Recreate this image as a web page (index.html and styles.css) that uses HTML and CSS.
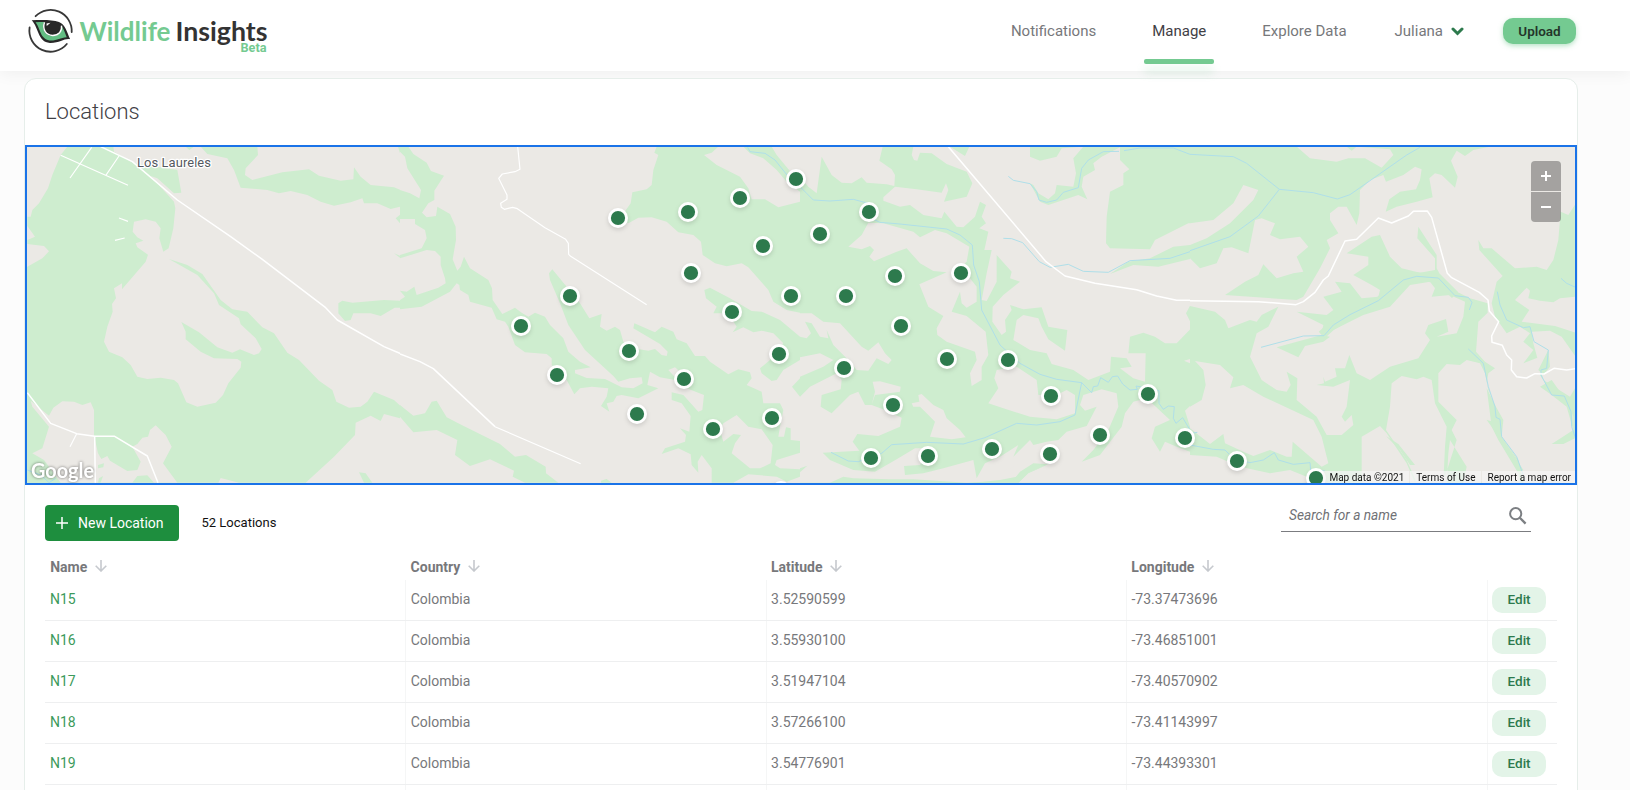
FILE: index.html
```html
<!DOCTYPE html>
<html lang="en">
<head>
<meta charset="utf-8">
<title>Wildlife Insights</title>
<link rel="stylesheet" href="styles.css">
</head>
<body>
<header class="topbar">
  <svg class="logo" width="250" height="60" viewBox="0 0 250 60">
    <g fill="none" stroke="#383838" stroke-width="1.8" stroke-linecap="round">
      <path d="M8.600 16.200A21.100 21.100 0 0 1 44.700 32"/>
      <path d="M2.600 27.500A21.100 21.100 0 0 0 39.800 44"/>
    </g>
    <path d="M4.700 20.300C14 19.700 25 19.500 32 22c6.500 2.500 8 10.500 11.200 17.300C37.500 38 33 43.200 23 43 10.500 42 12 28 4.700 20.300z" fill="#282828"/>
    <path d="M8.500 22.300c3-.3 6-.4 8.500-.4-2.500 8.500 2 14 8.700 14 6 0 9.500-4 9-10 2 3 3.300 6.800 5 11.300C33 37.500 30 41 22.500 40.500 13 39 13.500 28.500 8.500 22.300z" fill="#63bd83"/>
    <path d="M17.500 22.300c-2.500 7.500 1.700 13.200 8.200 13.200 6 0 9.500-4 8.800-9.800" fill="none" stroke="#fff" stroke-width="1.400"/>
    <circle cx="25.700" cy="27.300" r="6.300" fill="#282828"/>
    <path d="M19.500 23.500l4-.8-3.800 3.300z" fill="#fff"/>
    <text x="52.500" y="40.700" class="brand brand-green" textLength="91" lengthAdjust="spacingAndGlyphs">Wildlife</text>
    <text x="148.500" y="40.700" class="brand brand-dark" textLength="92" lengthAdjust="spacingAndGlyphs">Insights</text>
    <text x="213.500" y="52" class="brand-beta" textLength="26" lengthAdjust="spacingAndGlyphs">Beta</text>
  </svg>
  <nav class="nav">
    <a class="nav-item">Notifications</a>
    <a class="nav-item nav-active">Manage</a>
    <a class="nav-item nav-explore">Explore Data</a>
    <a class="nav-item nav-user">Juliana
      <svg width="13" height="9" viewBox="0 0 13 9"><path d="M2 2l4.500 4.500L11 2" fill="none" stroke="#2d7a4d" stroke-width="3" stroke-linecap="round"/></svg>
    </a>
    <button class="upload">Upload</button>
  </nav>
</header>
<main class="card">
  <h1 class="title">Locations</h1>
  <section class="map">
    <svg class="map-canvas" width="1550" height="336" viewBox="27 147 1550 336">
      <defs>
        <g id="pin"><circle r="10" fill="#fff"/><circle r="7.100" fill="#2d7a4d"/></g>
      </defs>
      <svg x="24" y="140" width="376" height="350" viewBox="0 0 1128 1050">
        <path class="dry" d="M0 0h1128v1050H0z"/>
        <path class="wood" d="M130 20 268 20 270 35 330 70 460 90 472 158 450 160 400 115 380 108 450 185 454 205 448 265 434 325 418 335 406 295 410 265 395 245 365 238 330 245 326 275 340 292 358 302 335 310 340 322 372 344 365 365 294 448 294 430 270 445 276 475 264 492 266 515 250 560 240 605 255 635 295 652 320 675 340 710 370 717 410 713 450 720 462 730 487 787 520 800 575 788 597 765 613 730 650 683 652 665 640 657 570 655 530 635 485 598 485 575 472 546 525 577 580 622 625 638 648 628 690 645 705 640 713 627 695 595 650 553 645 535 585 495 570 460 520 405 435 357 490 375 535 402 590 480 625 508 670 515 715 562 750 580 790 638 825 660 885 722 925 750 937 785 975 803 1010 800 1030 785 1050 755 1110 780 1160 825 1165 877 1130 835 1080 822 1070 843 1040 827 995 848 993 885 930 950 845 1028 645 1028 590 1014 583 1028 460 1028 0 1050 0 380 10 380 55 355 75 334 60 318 10 312 10 300 33 290 10 258 10 230 20 230 25 210 45 190 72 145 85 105 110 45z"/>
        <path class="dry" d="M20 782 75 827 88 803 115 784 150 785 175 795 200 787 210 810 210 885 222 940 232 957 250 948 258 962 310 993 340 990 350 965 325 920 340 912 355 893 372 890 378 870 395 856 425 885 443 920 417 970 460 1028 110 1028 60 960 25 940 55 925 75 860 25 800z"/>
        <path class="wood" d="M325 1028 340 1008 370 1006 390 1028zM222 975 240 970 238 982 222 985zM225 1015 237 1008 230 1028 222 1028zM1005 997 1025 1000 1045 1028 1020 1028z"/>
        <path class="wood" d="M530 20 700 20 702 45 665 85 663 105 685 120 775 97 855 88 885 107 950 122 988 118 990 82 1010 110 1040 135 1110 142 1190 175 1150 90 1128 50 1128 250 1115 235 1140 215 1128 200 1100 207 1060 190 1020 190 1015 175 980 187 930 197 890 185 850 165 800 153 765 160 730 150 650 143 630 90 610 55 550 42zM485 20h25l-14 10zM1110 340 1128 347 1128 353zM943 490 955 482 985 488 1080 480 1128 482 1128 503 1112 503 1070 528 1040 520 988 520 980 540 963 543 943 520zM1128 20 1128 40 1122 20z"/>
        <g class="road">
          <path class="road-main" d="M230 20 325 65 460 180 620 290 715 358 905 503 940 540 1080 620 1200 670"/>
          <path class="road-main" d="M10 758 80 850 158 881 212 889H272L370 948 402 1028M212 889 214 1028"/>
          <path d="M110 46 312 136M203 22 138 114M285 48 245 107M285 234 312 244M273 301 302 294M158 881 138 920"/>
        </g>
        <path class="river" d="M10 990 50 1005 75 1028 95 1015"/>
      </svg>
      <svg x="400" y="140" width="400" height="350" viewBox="0 0 1200 1050">
        <path class="dry" d="M0 0h1200v1050H0z"/>
        <path class="wood" d="M0 20 25 20 40 42 80 68 93 93 132 107 103 152 103 180 85 190 66 218 80 232 108 228 112 200 150 222 167 260 168 300 158 358 172 392 182 380 192 350 210 385 265 420 276 445 278 480 307 522 345 503 365 518 385 530 405 518 435 530 450 555 490 595 505 635 540 665 572 682 525 690 525 700 560 714 615 717 665 742 700 745 728 730 725 712 690 715 655 725 640 708 555 630 505 555 480 490 450 420 447 400 457 388 500 440 540 490 568 535 605 522 600 560 620 572 645 560 660 570 670 605 700 625 745 632 765 627 785 645 800 648 803 635 780 612 700 565 703 550 765 577 785 560 820 575 830 598 860 610 885 648 915 648 930 665 985 703 1015 688 1050 697 1055 715 1040 735 1085 755 1090 790 1140 790 1150 810 1140 860 1135 890 1152 890 1158 862 1172 865 1172 900 1200 903 1200 938 1130 960 1125 975 1140 985 1200 988 1200 1010 1160 1025 1130 1010 1045 1003 1000 1028 935 1028 935 985 905 945 893 965 895 998 875 975 872 943 835 925 785 942 795 925 855 905 858 885 840 865 868 875 872 828 845 790 815 780 815 757 850 765 895 815 907 810 912 765 860 745 825 720 780 712 750 695 742 735 775 745 715 775 665 765 650 768 640 785 620 790 628 815 603 798 620 770 625 745 575 740 540 745 523 763 500 720 455 675 455 655 440 642 375 637 345 615 325 560 315 545 290 538 275 503 210 485 205 465 180 450 178 435 170 430 150 455 65 500 0 508 0 480 15 470 0 452 20 455 43 440 50 465 115 443 137 430 135 415 122 375 122 350 105 333 80 330 0 355 0 345 65 325 80 295 75 270 45 252 45 237 0 237 0 150 30 160 58 175 63 150 22 85 15 50 0 35z"/>
        <path class="dry" d="M970 850 1010 825 1045 860 1085 868 1118 915 1112 970 1080 985 1050 985 995 940 1005 910 1023 885 1000 882 970 905 960 870zM805 690 825 682 840 695 825 712z"/>
        <path class="wood" d="M770 20 763 38 775 45 760 90 755 135 740 148 697 157 692 190 660 235 685 250 715 233 755 232 800 245 835 277 880 285 903 305 908 345 945 370 980 379 1025 370 1045 382 1105 450 1120 485 1160 510 1200 518 1200 185 1135 202 1095 178 1055 178 1045 145 1020 110 950 75 912 45 935 38 955 20z"/>
        <path class="wood" d="M1030 20 1115 20 1130 45 1200 130 1200 155 1160 125 1130 90 1090 55 1050 40zM913 450 930 443 990 475 1055 513 1085 515 1140 540 1200 590 1200 660 1150 690 1130 720 1115 723 1085 700 1080 685 1110 660 1150 610 1120 580 1085 572 1060 577 1030 562 998 577 1010 560 985 520 940 520 950 500 918 475zM1176 740 1200 715 1200 770zM0 795 40 827 75 820 95 785 110 782 140 832 185 855 300 912 345 950 378 945 437 980 438 1000 475 1028 375 1028 338 1010 342 992 270 958 210 978 165 945 172 900 110 870 40 877 0 830zM603 1022 620 1017 635 1028 603 1028z"/>
        <g class="road">
          <path d="M353 20 360 88 345 95 307 102 296 115 321 165 321 178 302 190 304 202 313 208 338 202 352 206 435 263 497 298 505 310 506 343 512 349 740 494"/>
          <path class="road-main" d="M0 642 60 665 100 686 285 860"/>
          <path d="M285 860 542 971"/>
        </g>
        <path class="river" d="M1043 22 1050 35 1095 40 1125 60 1165 110 1200 140"/>
      </svg>
      <svg x="800" y="140" width="390" height="350" viewBox="0 0 1170 1050">
        <path class="wood" d="M0 0h1170v1050H0z"/>
        <path class="dry" d="M0 20 248 20 238 62 275 88 285 105 283 138 260 133 250 172 285 140 350 148 425 158 438 130 445 150 432 185 500 170 517 130 500 95 440 72 395 40 360 38 352 62 342 60 335 45 340 20 450 20 495 48 508 20 690 20 690 50 720 62 770 50 785 25 850 20 820 55 828 100 820 140 770 135 765 160 745 178 715 160 700 135 690 130 720 185 745 195 790 180 835 165 862 178 845 140 850 110 885 90 880 70 905 50 960 22 960 60 988 88 970 100 970 135 930 155 920 230 918 310 930 325 1050 328 1065 300 1165 250 1170 250 1170 315 1120 320 1050 355 985 365 930 402 1000 375 1075 380 1170 357 1170 497 1158 520 1178 560 1130 610 1095 610 1065 590 1030 578 990 590 985 640 1037 640 1035 725 1000 715 960 685 995 680 980 655 933 650 930 695 865 720 820 690 755 672 740 640 690 630 640 600 650 540 670 525 715 535 725 560 745 598 795 632 802 570 745 560 725 502 670 508 630 495 635 510 615 540 618 575 605 585 577 545 578 500 610 465 660 425 630 415 635 395 590 345 590 425 560 483 545 480 560 400 575 330 553 330 565 275 538 265 558 250 545 230 558 195 540 185 525 230 490 262 470 260 433 215 425 235 370 225 330 195 300 200 250 182 250 172 260 133 200 128 185 112 155 130 125 128 95 105 65 50 50 160 25 140 0 110z"/>
        <path class="dry" d="M205 248 185 285 145 320 185 328 210 318 222 330 208 350 222 364 290 335 320 325 360 370 400 393 440 397 358 433 385 500 430 528 410 565 412 585 440 605 525 635 530 660 510 700 515 738 545 720 545 680 565 645 557 575 500 528 455 515 480 455 485 490 500 503 530 485 530 440 510 415 460 400 500 365 508 320 440 280 405 270 360 292 340 275 250 250z"/>
        <path class="dry" d="M0 520 35 520 70 545 120 550 185 620 205 632 235 607 255 640 275 660 265 672 230 655 205 692 170 690 150 665 100 615 80 570 85 595 60 590 35 550 15 545 33 580 20 595 0 590zM0 652 60 640 100 660 70 680 0 710zM590 690 650 680 710 720 715 765 780 760 800 750 825 765 825 820 770 838 690 830 610 805 565 790 595 745 583 715zM355 765 365 762 400 795 430 810 440 835 480 870 497 892 455 898 390 890 405 845 380 820 360 800 340 800 335 790 358 785z"/>
        <path class="dry" d="M0 770 30 740 110 700 125 720 122 748 65 765 62 800 95 820 150 765 175 755 195 795 215 795 225 765 300 755 302 740 240 724 218 725 225 755 215 795 255 810 305 833 300 860 235 888 172 882 158 905 178 932 68 938 90 960 160 990 225 995 290 958 345 925 390 925 360 975 312 978 315 1005 370 1000 430 985 520 960 530 1015 555 970 600 950 655 915 640 950 690 900 700 915 740 905 775 900 800 875 860 858 890 800 855 812 840 795 850 765 905 748 950 760 955 800 925 870 880 930 845 965 900 945 965 860 975 820 1000 785 1040 775 1110 840 1065 860 1055 895 1080 935 1095 905 1130 920 1170 935 1170 1028 655 1028 685 1000 740 975 650 1010 600 1020 550 1025 500 1028 340 1018 270 1018 160 1015 130 1010 90 1028 0 1028z"/>
        <path class="wood" d="M0 985 22 977 0 997zM655 1028 685 998 745 973 700 970 660 995 640 1020 540 1028z"/>
        <path class="dry" d="M1152 662 1170 657 1170 670zM1155 812 1170 798 1170 860zM600 1000 650 975 690 970 640 1010 600 1018z"/>
        <g class="river">
          <path d="M0 140 20 160 40 180 90 183 160 178 205 190M225 240 240 247 300 252 440 267 480 285 517 315 521 375 538 425 545 510 600 615 660 670 720 703 770 718 845 728 875 758 880 740 893 738 902 713 925 727 937 710 953 708 968 732 990 750 1012 748 1008 738 1045 745 1077 752 1077 790 1090 808 1105 798 1123 800 1120 835 1128 850 1148 833 1170 870M845 728 825 825 780 845 710 855 650 850 555 893 490 912 380 907 275 914 245 940 175 965 145 963 93 937"/>
          <path d="M625 109 640 121 690 131 710 155 717 180 740 187 770 180 790 157 835 143 845 85 865 60 910 35 957 34M972 32 1020 24 1120 24 1170 43M610 295 635 296 668 308 718 365 750 382 805 373 850 394 925 397 990 362 1110 355 1170 335"/>
        </g>
        <path class="road road-main" d="M445 20 738 365 795 408 885 430 1010 449 1070 468 1130 481 1170 481"/>
      </svg>
      <svg x="1190" y="140" width="388" height="350" viewBox="0 0 1164 1050">
        <path class="wood" d="M0 0h1164v1050H0z"/>
        <path class="dry" d="M320 20 360 55 440 65 475 55 525 55 575 83 610 45 600 28 500 20 485 32 470 20zM0 250 70 240 130 190 160 135 205 150 190 180 120 250 50 295 0 315zM0 355 30 385 80 370 100 325 125 322 175 340 185 290 195 240 215 235 255 250 240 285 270 298 330 290 355 320 320 350 340 395 310 400 260 415 220 373 205 405 165 425 105 465 320 480 340 470 390 385 420 325 410 300 445 280 420 240 420 220 445 200 470 200 500 255 508 220 510 150 540 120 580 105 588 125 640 105 675 80 695 88 690 120 678 148 630 155 598 178 587 215 620 200 680 185 728 172 718 115 735 100 755 105 795 143 803 110 783 62 800 32 825 48 850 30 900 20 1164 20 1164 180 1135 225 1112 215 1105 300 1090 360 1070 390 1040 380 975 385 905 325 880 325 865 300 868 330 938 408 920 425 905 490 915 530 950 580 990 560 1020 580 1000 605 1030 630 1000 670 1050 650 1060 680 1050 705 1085 760 1125 765 1150 830 1150 870 1085 912 1120 912 1164 890 1164 1028 1000 1028 985 960 935 890 930 850 890 840 915 800 890 730 895 700 915 685 885 665 858 635 865 545 893 518 893 490 840 475 770 440 740 385 740 345 685 260 682 295 735 355 735 390 690 398 635 385 600 350 570 285 545 290 470 340 535 350 535 375 490 405 545 435 570 450 565 470 515 475 480 430 435 425 455 455 400 470 430 510 410 525 320 515 400 555 395 580 430 570 520 525 600 500 660 435 720 425 735 445 725 470 780 465 825 485 820 530 800 580 740 590 775 575 768 537 715 555 705 580 720 600 685 655 600 680 540 720 500 700 478 645 465 685 435 685 440 710 405 725 400 710 402 730 380 735 430 740 480 720 470 800 455 830 465 845 485 825 490 855 455 885 410 885 380 830 320 780 322 715 290 695 302 735 290 755 260 750 215 720 180 650 200 580 235 560 265 500 215 525 200 545 180 540 115 565 105 540 75 515 0 498z"/>
        <path class="wood" d="M260 622 325 652 345 618 400 605 420 590 395 585z"/>
        <path class="bank" d="M395 585 425 558 480 525 565 485 640 425 680 410 745 415 795 465"/>
        <path class="dry" d="M15 663 90 675 130 712 120 745 160 735 220 770 370 840 395 890 415 970 395 980 308 905 305 950 290 950 240 930 190 948 160 935 105 910 100 882 60 912 0 865 0 800 35 780 47 735 40 690zM745 700 770 672 810 675 830 660 870 670 885 700 895 750 915 790 912 820 890 840 912 870 935 890 980 960 990 1028 820 1028 830 980 780 900 775 940 770 1028 675 1028 680 1010 765 1010 800 900 785 870 800 840 745 785zM605 730 635 708 680 718 700 710 725 720 735 790 770 860 765 920 760 1028 680 1028 650 960 588 870 600 800zM515 890 570 858 590 880 650 970 675 1028 515 1028zM0 945 80 950 150 980 240 1000 300 990 350 1010 360 1028 0 1028z"/>
        <path class="dry" d="M975 480 1010 443 1020 452 1015 475 1050 482 1090 487 1110 475 1155 470 1164 580 1095 558 995 545 1018 510zM1025 575 1080 572 1115 590 1164 660 1164 730 1140 770 1060 720 1030 610z"/>
        <path class="wood" d="M1050 740 1085 720 1110 755 1145 780 1150 870 1130 800 1085 765zM1045 690 1075 630 1080 680 1060 705z"/>
        <path class="wood" d="M588 888 625 912 675 975 660 975 630 930zM890 745 918 800 940 840 935 890 1000 990 985 1000 925 900 905 860z"/>
        <g class="river">
          <path d="M0 43 130 50 170 70 268 148 370 158 442 177 480 164 650 45 690 22M268 148 205 228 120 290 0 332M213 622 340 588 402 587 430 555 480 524 565 482 640 420 680 409 745 414 795 467 835 472 846 487 838 510M922 455 930 495 950 540 1000 563 1020 560 1032 605 1075 630 1070 685 1053 690 1053 705 1085 765 1123 768 1143 815 1145 860 1155 890M835 627 880 670 895 740 915 800 918 832 930 838 935 890 980 950 1005 1020M1113 415 1130 430 1155 441M0 915 70 928 105 930 130 955 180 968 220 960 253 938 265 960 310 973 360 968 362 990 405 993M5 880 22 877"/>
        </g>
        <path class="road road-main" d="M0 482 205 485 318 494 340 485 375 457 400 420 415 408 465 303 500 298 565 234 605 249 655 228 670 214 712 213 725 232 772 400 785 413 868 457 894 480 898 513 926 545 905 588 906 607 937 616 950 645 965 660 964 690 980 710 1010 714 1035 701 1062 702 1092 685 1130 690 1164 685"/>
      </svg>
      <g class="pins">
        <use href="#pin" x="618" y="218"/><use href="#pin" x="688" y="212"/><use href="#pin" x="740" y="198"/><use href="#pin" x="763" y="246"/>
        <use href="#pin" x="691" y="273"/><use href="#pin" x="570" y="296"/><use href="#pin" x="732" y="312"/><use href="#pin" x="791" y="296"/>
        <use href="#pin" x="521" y="326"/><use href="#pin" x="629" y="351"/><use href="#pin" x="779" y="354"/><use href="#pin" x="557" y="375"/>
        <use href="#pin" x="684" y="379"/><use href="#pin" x="637" y="414"/><use href="#pin" x="713" y="429"/><use href="#pin" x="772" y="418"/>
        <use href="#pin" x="796" y="179"/><use href="#pin" x="781" y="491"/><use href="#pin" x="869" y="212"/><use href="#pin" x="820" y="234"/>
        <use href="#pin" x="961" y="273"/><use href="#pin" x="895" y="276"/><use href="#pin" x="846" y="296"/><use href="#pin" x="901" y="326"/>
        <use href="#pin" x="947" y="359"/><use href="#pin" x="844" y="368"/><use href="#pin" x="1008" y="360"/><use href="#pin" x="1051" y="396"/>
        <use href="#pin" x="893" y="405"/><use href="#pin" x="1148" y="394"/><use href="#pin" x="1100" y="435"/><use href="#pin" x="871" y="458"/>
        <use href="#pin" x="928" y="456"/><use href="#pin" x="992" y="449"/><use href="#pin" x="1050" y="454"/><use href="#pin" x="1185" y="438"/>
        <use href="#pin" x="1237" y="461"/><use href="#pin" x="1316" y="478"/>
      </g>
      <text class="place" x="137" y="167" textLength="74">Los Laureles</text>
      <text class="google" x="31" y="478" textLength="63" lengthAdjust="spacingAndGlyphs">Google</text>
    </svg>
    <div class="zoom">
      <span><svg width="10" height="10" viewBox="0 0 10 10"><path d="M5 0v10M0 5h10" stroke="#fff" stroke-width="2"/></svg></span>
      <span><svg width="10" height="10" viewBox="0 0 10 10"><path d="M0 5h10" stroke="#fff" stroke-width="2"/></svg></span>
    </div>
    <div class="legal"><span>Map data ©2021</span><span>Terms of Use</span><span>Report a map error</span></div>
  </section>
  <section class="tools">
    <button class="new"><svg width="12" height="12" viewBox="0 0 12 12"><path d="M6 0v12M0 6h12" stroke="#fff" stroke-width="1.500"/></svg>New Location</button>
    <span class="count">52 Locations</span>
    <label class="search"><span>Search for a name</span>
      <svg width="18" height="18" viewBox="0 0 18 18" fill="none" stroke="#7c7f83"><circle cx="6.700" cy="6.700" r="5.600" stroke-width="2"/><path d="M10.800 10.800l5.800 5.800" stroke-width="2.300"/></svg>
    </label>
  </section>
  <section class="table">
    <div class="row head">
      <div>Name <svg class="sort" viewBox="0 0 12 12"><path d="M6 0v11M.7 5.700 6 11l5.300-5.300"/></svg></div>
      <div>Country <svg class="sort" viewBox="0 0 12 12"><path d="M6 0v11M.7 5.700 6 11l5.300-5.300"/></svg></div>
      <div>Latitude <svg class="sort" viewBox="0 0 12 12"><path d="M6 0v11M.7 5.700 6 11l5.300-5.300"/></svg></div>
      <div>Longitude <svg class="sort" viewBox="0 0 12 12"><path d="M6 0v11M.7 5.700 6 11l5.300-5.300"/></svg></div>
      <div></div>
    </div>
    <div class="row"><div class="name">N15</div><div>Colombia</div><div>3.52590599</div><div>-73.37473696</div><div><button class="edit">Edit</button></div></div>
    <div class="row"><div class="name">N16</div><div>Colombia</div><div>3.55930100</div><div>-73.46851001</div><div><button class="edit">Edit</button></div></div>
    <div class="row"><div class="name">N17</div><div>Colombia</div><div>3.51947104</div><div>-73.40570902</div><div><button class="edit">Edit</button></div></div>
    <div class="row"><div class="name">N18</div><div>Colombia</div><div>3.57266100</div><div>-73.41143997</div><div><button class="edit">Edit</button></div></div>
    <div class="row"><div class="name">N19</div><div>Colombia</div><div>3.54776901</div><div>-73.44393301</div><div><button class="edit">Edit</button></div></div>
    <div class="row"><div></div><div></div><div></div><div></div><div></div></div>
  </section>
</main>
</body>
</html>
```
FILE: styles.css
```css
* { box-sizing: border-box; }
body { margin: 0; height: 790px; overflow: hidden; background: #fcfcfc; font-family: Roboto, "Liberation Sans", sans-serif; }
button { font-family: inherit; border: 0; padding: 0; }

.topbar { display: flex; justify-content: space-between; height: 71px; padding: 0 54px 0 27px; background: #fff; box-shadow: 0 2px 16px rgba(0, 0, 0, .06); }
.logo { display: block; }
.brand { font: 700 26.500px Lato, sans-serif; }
.brand-green { fill: #74ca91; }
.brand-dark { fill: #333; }
.brand-beta { font: 700 12px Roboto, sans-serif; fill: #74ca91; }
.nav { display: flex; align-items: flex-start; }
.nav-item { height: 64px; padding: 3px 8px 0; line-height: 56px; font-size: 15px; color: #77787b; margin-right: 40px; white-space: nowrap; }
.nav-active { color: #3f4045; }
.nav-active::after { content: ""; display: block; height: 5px; margin: 0 -8px; border-radius: 2px; background: #74ca91; box-shadow: 0 9px 9px rgba(116, 202, 145, .22); }
.nav-explore { margin-right: 32px; }
.nav-user { display: flex; align-items: center; gap: 8px; height: 59px; margin-right: 31px; }
.upload { width: 73px; height: 26px; margin-top: 18px; border-radius: 10px; background: #74ca91; color: #24352b; font-size: 13.500px; line-height: 25px; font-weight: 600; box-shadow: 0 2px 5px rgba(116, 202, 145, .5); }

.card { width: 1554px; height: 730px; margin: 7px 0 0 24px; border: 1px solid #e6eeea; border-radius: 12px; background: #fff; overflow: hidden; }
.title { height: 66px; margin: 0; padding-left: 20px; line-height: 65px; font-size: 22px; font-weight: 300; color: #3f4045; }

.map { position: relative; height: 340px; border: 2px solid #1a73e8; background: #ebe9e5; overflow: hidden; }
.map-canvas { display: block; }
.dry { fill: #ebe9e5; }
.wood { fill: #ceedcf; }
.bank { fill: none; stroke: #ceedcf; stroke-width: 26; }
.river { fill: none; stroke: #afdfe9; stroke-width: 3; stroke-linejoin: round; }
.road { fill: none; stroke: #fff; stroke-width: 3.500; stroke-linejoin: round; }
.road-main { stroke-width: 4.500; }
.pins { filter: drop-shadow(0 2px 2px rgba(0, 0, 0, .13)); }
.place { font: 400 13px Roboto, sans-serif; fill: #55595f; stroke: #fff; stroke-width: 2.500px; paint-order: stroke; stroke-linejoin: round; }
.google { font: 700 20px Lato, sans-serif; fill: #fff; filter: drop-shadow(0 0 1.500px rgba(0, 0, 0, .5)); }
.zoom { position: absolute; top: 14px; right: 14px; display: grid; gap: 1px; }
.zoom span { display: flex; align-items: center; justify-content: center; width: 30px; height: 30px; background: rgba(0, 0, 0, .3); }
.zoom span:first-child { border-radius: 4px 4px 0 0; }
.zoom span:last-child { border-radius: 0 0 4px 4px; }
.legal { position: absolute; right: 0; bottom: 0; display: flex; height: 12px; font-size: 10px; line-height: 13px; color: #111; gap: 1px; white-space: nowrap; }
.legal span { padding: 0 5px 0 6px; background: rgba(245, 245, 245, .72); }
.legal span:last-child { padding-right: 4px; }

.tools { display: flex; height: 62px; padding: 20px 46px 0 20px; }
.new { display: flex; align-items: center; gap: 10px; width: 134px; height: 36px; padding-left: 11px; border-radius: 4px; background: #1e8e3e; color: #fff; font-size: 14px; white-space: nowrap; }
.count { margin-left: 22.500px; line-height: 36px; font-size: 13px; color: #111; }
.search { display: flex; justify-content: space-between; width: 250px; height: 27px; margin-left: auto; padding: 2px 4px 0 8px; border-bottom: 1px solid #7b7c80; font-size: 13.700px; font-style: italic; line-height: 17px; color: #707175; }

.table { margin: 0 20px; }
.row { display: grid; grid-template-columns: repeat(4, 360.400px) 1fr; height: 41px; border-bottom: 1px solid #eeeff0; font-size: 14px; color: #77787b; }
.row > div { padding-left: 4.300px; line-height: 38px; border-left: 1px solid #f5f6f6; }
.row > div:first-child { padding-left: 4px; border-left-color: transparent; }
.row > div:last-child { padding-left: 4.500px; }
.head { height: 33px; border: 0; font-weight: 700; }
.row.head > div { border: 0; padding-left: 5.200px; line-height: 40px; }
.sort { width: 12px; height: 12px; margin-left: 4px; fill: none; stroke: #c6c9ce; stroke-width: 1.600; }
.row .name { color: #3c9a5b; }
.edit { display: block; width: 54px; height: 26px; margin-top: 7px; padding-bottom: 2px; border-radius: 10px; background: #e3f4e8; color: #2d7a4d; font-size: 13.500px; font-weight: 500; }
```
